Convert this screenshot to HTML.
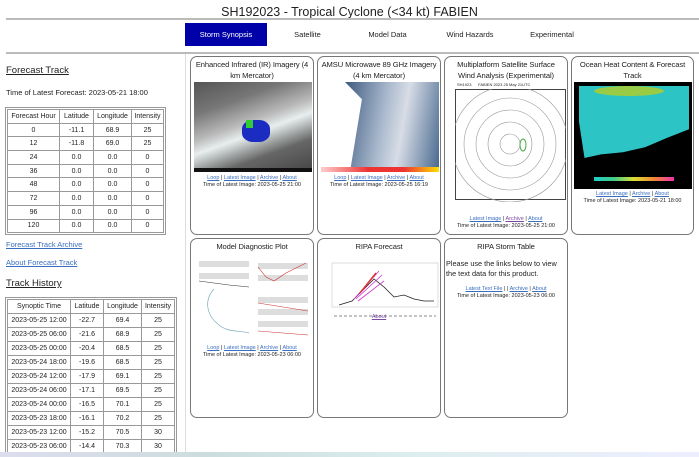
<!DOCTYPE html>
<html><head><meta charset="utf-8"><style>
*{margin:0;padding:0;box-sizing:border-box}
body{width:699px;height:457px;overflow:hidden;background:#fff;font-family:"Liberation Sans",sans-serif;color:#222;position:relative}
.a{position:absolute}
.title{left:0;width:699px;top:5px;text-align:center;font-size:12.5px;color:#222}
.hr{left:6px;right:0;height:2px;background:#bbb}
.nav{top:23px;height:23px;font-size:7.5px;line-height:23px;text-align:center;color:#222}
.card{border:1px solid #777;border-radius:7px;background:#fff}
.ct{position:absolute;left:0;right:0;text-align:center;font-size:7.6px;line-height:11px;color:#222;letter-spacing:-0.1px}
.lk{position:absolute;left:0;right:0;text-align:center;font-size:5.5px;line-height:7px;color:#222}
.lk span{color:#3a6fbf;text-decoration:underline}
.lk span.v{color:#7a4aa0}
table{border-collapse:collapse;font-size:7px;position:absolute}
td{border:1px solid #999;text-align:center;padding:0;color:#222}
table.t{outline:1px solid #999;outline-offset:1px}
.h{font-size:9.5px;text-decoration:underline;color:#222}
.bl{color:#3a6fbf;text-decoration:underline;font-size:7.5px}
</style></head><body>
<div class="a title">SH192023 - Tropical Cyclone (&lt;34 kt) FABIEN</div>
<div class="a hr" style="top:18px"></div>
<div class="a hr" style="top:52px"></div>
<div class="a nav" style="left:185px;width:82px;background:#0000a8;color:#fff">Storm Synopsis</div>
<div class="a nav" style="left:285px;width:45px">Satellite</div>
<div class="a nav" style="left:360px;width:55px">Model Data</div>
<div class="a nav" style="left:440px;width:60px">Wind Hazards</div>
<div class="a nav" style="left:520px;width:64px">Experimental</div>
<div class="a" style="left:185px;top:54px;width:1px;height:400px;background:#ddd"></div>

<div class="a h" style="left:6px;top:65px">Forecast Track</div>
<div class="a" style="left:6px;top:88px;font-size:7.5px">Time of Latest Forecast: 2023-05-21 18:00</div>
<table class="t" style="left:7px;top:109px;width:157px">
<colgroup><col style="width:52px"><col style="width:34px"><col style="width:38px"><col></colgroup>
<tr style="height:13.7px"><td>Forecast Hour</td><td>Latitude</td><td>Longitude</td><td>Intensity</td></tr>
<tr style="height:13.7px"><td>0</td><td>-11.1</td><td>68.9</td><td>25</td></tr>
<tr style="height:13.7px"><td>12</td><td>-11.8</td><td>69.0</td><td>25</td></tr>
<tr style="height:13.7px"><td>24</td><td>0.0</td><td>0.0</td><td>0</td></tr>
<tr style="height:13.7px"><td>36</td><td>0.0</td><td>0.0</td><td>0</td></tr>
<tr style="height:13.7px"><td>48</td><td>0.0</td><td>0.0</td><td>0</td></tr>
<tr style="height:13.7px"><td>72</td><td>0.0</td><td>0.0</td><td>0</td></tr>
<tr style="height:13.7px"><td>96</td><td>0.0</td><td>0.0</td><td>0</td></tr>
<tr style="height:13.7px"><td>120</td><td>0.0</td><td>0.0</td><td>0</td></tr>
</table>
<div class="a bl" style="left:6px;top:240px">Forecast Track Archive</div>
<div class="a bl" style="left:6px;top:258px">About Forecast Track</div>
<div class="a h" style="left:6px;top:278px">Track History</div>
<table class="t" style="left:7px;top:299px;width:168px">
<colgroup><col style="width:63px"><col style="width:33px"><col style="width:38px"><col></colgroup>
<tr style="height:14px"><td>Synoptic Time</td><td>Latitude</td><td>Longitude</td><td>Intensity</td></tr>
<tr style="height:14px"><td>2023-05-25 12:00</td><td>-22.7</td><td>69.4</td><td>25</td></tr>
<tr style="height:14px"><td>2023-05-25 06:00</td><td>-21.6</td><td>68.9</td><td>25</td></tr>
<tr style="height:14px"><td>2023-05-25 00:00</td><td>-20.4</td><td>68.5</td><td>25</td></tr>
<tr style="height:14px"><td>2023-05-24 18:00</td><td>-19.6</td><td>68.5</td><td>25</td></tr>
<tr style="height:14px"><td>2023-05-24 12:00</td><td>-17.9</td><td>69.1</td><td>25</td></tr>
<tr style="height:14px"><td>2023-05-24 06:00</td><td>-17.1</td><td>69.5</td><td>25</td></tr>
<tr style="height:14px"><td>2023-05-24 00:00</td><td>-16.5</td><td>70.1</td><td>25</td></tr>
<tr style="height:14px"><td>2023-05-23 18:00</td><td>-16.1</td><td>70.2</td><td>25</td></tr>
<tr style="height:14px"><td>2023-05-23 12:00</td><td>-15.2</td><td>70.5</td><td>30</td></tr>
<tr style="height:14px"><td>2023-05-23 06:00</td><td>-14.4</td><td>70.3</td><td>30</td></tr>
</table>

<!-- Row 1 -->
<div class="a card" style="left:190px;top:56px;width:124px;height:179px">
<div class="ct" style="top:2px">Enhanced Infrared (IR) Imagery (4 km Mercator)</div>
<div class="a" style="left:3px;top:25px;width:118px;height:90px;background:linear-gradient(160deg,#555 0%,#777 25%,#bbb 45%,#e8eeee 55%,#666 75%,#444 100%)">
<div class="a" style="left:48px;top:38px;width:28px;height:22px;background:#1a2dc0;border-radius:40%"></div>
<div class="a" style="left:52px;top:38px;width:7px;height:8px;background:#3c3"></div>
<div class="a" style="left:0;bottom:0;width:118px;height:4px;background:#111"></div></div>
<div class="lk" style="top:118px"><span>Loop</span> | <span>Latest Image</span> | <span>Archive</span> | <span>About</span><br>Time of Latest Image: 2023-05-25 21:00</div>
</div>
<div class="a card" style="left:317px;top:56px;width:124px;height:179px">
<div class="ct" style="top:2px">AMSU Microwave 89 GHz Imagery (4 km Mercator)</div>
<div class="a" style="left:3px;top:25px;width:118px;height:90px;background:#fff">
<div class="a" style="left:24px;top:0;width:94px;height:86px;background:linear-gradient(100deg,#3e5a80,#a8b8cc 40%,#d8dde6 60%,#4a6a90);clip-path:polygon(0 0,100% 0,100% 100%,6% 100%,18% 20%)"></div>
<div class="a" style="left:0;bottom:0;width:118px;height:5px;background:linear-gradient(90deg,#fcc,#e33 40%,#e33 70%,#fd0)"></div></div>
<div class="lk" style="top:118px"><span>Loop</span> | <span>Latest Image</span> | <span>Archive</span> | <span>About</span><br>Time of Latest Image: 2023-05-25 16:19</div>
</div>
<div class="a card" style="left:444px;top:56px;width:124px;height:179px">
<div class="ct" style="top:2px;padding:0 6px">Multiplatform Satellite Surface Wind Analysis (Experimental)</div>
<div class="a" style="left:12px;top:25px;font-size:4px">SH1923 &nbsp;&nbsp;&nbsp;&nbsp; FABIEN 2023 25 May 21UTC</div>
<svg class="a" style="left:10px;top:32px" width="111" height="113"><rect x="0.5" y="0.5" width="110" height="110" fill="#fff" stroke="#444"/>
<g fill="none" stroke="#999" stroke-width="0.6"><circle cx="55" cy="55" r="10"/><circle cx="55" cy="55" r="22"/><circle cx="55" cy="55" r="34"/><circle cx="55" cy="55" r="46"/><circle cx="55" cy="55" r="58"/></g>
<ellipse cx="68" cy="56" rx="3" ry="6" fill="none" stroke="#4a4"/></svg>
<div class="lk" style="top:159px"><span>Latest Image</span> | <span class="v">Archive</span> | <span>About</span><br>Time of Latest Image: 2023-05-25 21:00</div>
</div>
<div class="a card" style="left:571px;top:56px;width:123px;height:179px">
<div class="ct" style="top:2px;padding:0 6px">Ocean Heat Content &amp; Forecast Track</div>
<div class="a" style="left:2px;top:25px;width:118px;height:107px;background:#000">
<div class="a" style="left:5px;top:4px;width:110px;height:72px;background:#2cc4c4;clip-path:polygon(0 0,100% 0,100% 60%,80% 72%,60% 85%,40% 92%,20% 95%,5% 100%,0 50%)"></div>
<div class="a" style="left:20px;top:4px;width:70px;height:10px;background:#9c4;border-radius:50%"></div>
<div class="a" style="left:20px;top:95px;width:80px;height:4px;background:linear-gradient(90deg,#2cc,#4c8,#dd3,#e83,#e3a)"></div></div>
<div class="lk" style="top:134px"><span>Latest Image</span> | <span>Archive</span> | <span>About</span><br>Time of Latest Image: 2023-05-21 18:00</div>
</div>

<!-- Row 2 -->
<div class="a card" style="left:190px;top:238px;width:124px;height:180px">
<div class="ct" style="top:2px">Model Diagnostic Plot</div>
<svg class="a" style="left:3px;top:16px" width="118" height="86"><rect width="118" height="86" fill="#fff"/>
<g fill="#ddd"><rect x="5" y="6" width="50" height="6"/><rect x="5" y="18" width="50" height="6"/><rect x="64" y="8" width="50" height="6"/><rect x="64" y="20" width="50" height="6"/><rect x="64" y="42" width="50" height="6"/><rect x="64" y="54" width="50" height="6"/><rect x="64" y="66" width="50" height="6"/></g>
<path d="M5 26 L20 28 L35 30 L55 32" stroke="#333" fill="none" stroke-width=".6"/>
<path d="M64 12 L72 22 L80 26 L92 18 L112 8" stroke="#c33" fill="none" stroke-width=".6"/>
<path d="M20 34 C10 45 12 60 25 70 C35 78 45 75 55 78" stroke="#7ab" fill="none" stroke-width=".7"/>
<path d="M64 48 L114 56 M64 76 L114 80" stroke="#c33" fill="none" stroke-width=".6"/></svg>
<div class="lk" style="top:106px"><span>Loop</span> | <span>Latest Image</span> | <span>Archive</span> | <span>About</span><br>Time of Latest Image: 2023-05-23 06:00</div>
</div>
<div class="a card" style="left:317px;top:238px;width:124px;height:180px">
<div class="ct" style="top:2px">RIPA Forecast</div>
<svg class="a" style="left:6px;top:20px" width="116" height="60"><rect x="8" y="4" width="106" height="44" fill="#fff" stroke="#bbb" stroke-width=".5"/>
<path d="M15 46 L28 42 L40 30 L50 20 L60 28 L70 38 L80 36 L90 40 L100 42 L110 42" stroke="#222" fill="none" stroke-width=".8"/>
<path d="M30 40 L55 12 M32 40 L58 16 M34 42 L60 22" stroke="#c3c" fill="none" stroke-width=".8"/>
<path d="M36 34 L52 14" stroke="#d33" stroke-width="1.5"/>
<line x1="10" y1="57" x2="112" y2="57" stroke="#888" stroke-dasharray="3 2" stroke-width="1"/></svg>
<div class="lk" style="top:75px"><span class="v">About</span></div>
</div>
<div class="a card" style="left:444px;top:238px;width:124px;height:180px">
<div class="ct" style="top:2px">RIPA Storm Table</div>
<div class="a" style="left:1px;top:20px;width:122px;font-size:7.3px;line-height:10px">Please use the links below to view the text data for this product.</div>
<div class="lk" style="top:47px"><span>Latest Text File</span> | | <span>Archive</span> | <span>About</span><br>Time of Latest Image: 2023-05-23 06:00</div>
</div>

<div class="a" style="left:0;top:452px;width:699px;height:5px;background:linear-gradient(90deg,#dde 0%,#cdd 30%,#dee 60%,#eef 100%)"></div>
</body></html>
